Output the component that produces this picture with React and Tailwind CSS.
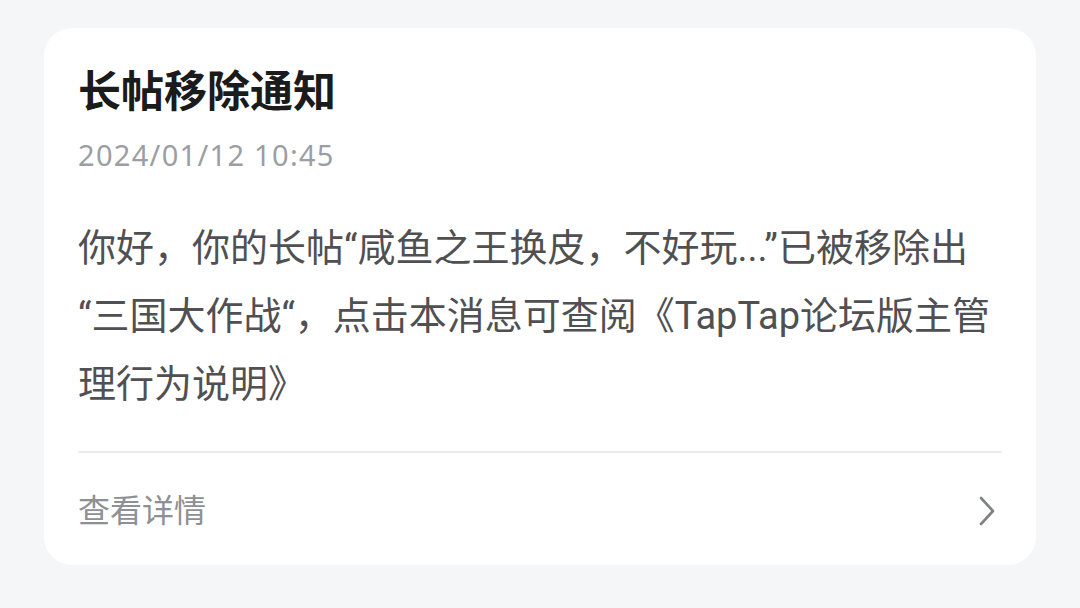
const font = { fontFamily: '"Roboto", "Noto Sans CJK SC", sans-serif' };

export default function App() {
  return (
    <div className="w-[1080px] h-[608px] bg-[#f5f6f8] pt-[28px] pl-[44px]" style={font}>
      <div className="w-[992px] h-[537px] bg-white rounded-[28px] px-[34px] pt-[35px] flex flex-col">
        {/* Judul */}
        <h1 className="text-[43px] leading-[58px] font-bold text-[#1b1b1b]">长帖移除通知</h1>
        <p className="mt-[14px] text-[29px] leading-[40px] tracking-[1.3px] text-[#9b9ea3] font-['Noto_Sans',sans-serif]">2024/01/12 10:45</p>

        {/* Isi pesan */}
        <div className="mt-[39px] text-[38px] leading-[68px] text-[#505052] whitespace-nowrap">
          <div>你好，你的长帖“咸鱼之王换皮，不好玩...”已被移除出</div>
          <div>“三国大作战“，点击本消息可查阅《TapTap论坛版主管</div>
          <div>理行为说明》</div>
        </div>

        <div className="mt-[33px] h-[2px] bg-[#ebebeb]" />

        <div className="flex-1 flex items-center justify-between pt-[4px]">
          <span className="text-[32px] text-[#8d9094]">查看详情</span>
          <svg width="18" height="30" viewBox="0 0 18 30" className="mr-[6px]">
            <path d="M3 2 L15 15 L3 28" fill="none" stroke="#7f8185" strokeWidth="2.6" strokeLinecap="round" strokeLinejoin="round" />
          </svg>
        </div>
      </div>
    </div>
  );
}
